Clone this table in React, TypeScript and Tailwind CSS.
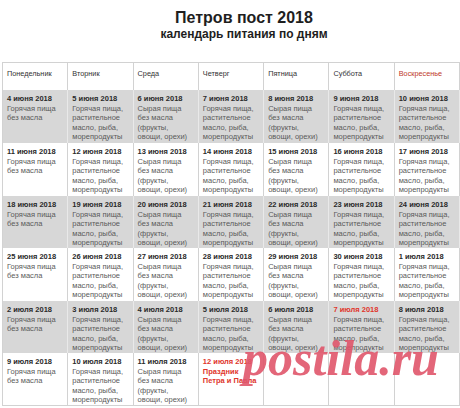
import React from 'react';

type Cell = { date?: string; lines?: string[]; red?: boolean; holiday?: boolean };

const HOT = ['Горячая пища', 'без масла'];
const OIL = ['Горячая пища,', 'растительное', 'масло, рыба,', 'морепродукты'];
const RAW = ['Сырая пища', 'без масла', '(фрукты,', 'овощи, орехи)'];

const days = ['Понедельник', 'Вторник', 'Среда', 'Четверг', 'Пятница', 'Суббота', 'Воскресенье'];
const pattern = [HOT, OIL, RAW, OIL, RAW, OIL, OIL];

const week = (dates: string[]): Cell[] => dates.map((d, i) => ({ date: d, lines: pattern[i] }));

const rows: Cell[][] = [
  week(['4 июня 2018', '5 июня 2018', '6 июня 2018', '7 июня 2018', '8 июня 2018', '9 июня 2018', '10 июня 2018']),
  week(['11 июня 2018', '12 июня 2018', '13 июня 2018', '14 июня 2018', '15 июня 2018', '16 июня 2018', '17 июня 2018']),
  week(['18 июня 2018', '19 июня 2018', '20 июня 2018', '21 июня 2018', '22 июня 2018', '23 июня 2018', '24 июня 2018']),
  week(['25 июня 2018', '26 июня 2018', '27 июня 2018', '28 июня 2018', '29 июня 2018', '30 июня 2018', '1 июля 2018']),
  week(['2 июля 2018', '3 июля 2018', '4 июля 2018', '5 июля 2018', '6 июля 2018', '7 июля 2018', '8 июля 2018']).map((c, i) =>
    i === 5 ? { ...c, red: true } : c,
  ),
  [
    { date: '9 июля 2018', lines: HOT },
    { date: '10 июля 2018', lines: OIL },
    { date: '11 июля 2018', lines: RAW },
    { date: '12 июля 2018', lines: ['Праздник', 'Петра и Павла'], holiday: true },
    {},
    {},
    {},
  ],
];

const rowHeights = ['h-[53px]', 'h-[53px]', 'h-[52px]', 'h-[53px]', 'h-[52px]', 'h-[52px]'];

export default function App() {
  return (
    <div className="relative w-[460px] h-[408px] bg-white overflow-hidden font-['Liberation_Sans',Arial,sans-serif]">
      <div className="pl-[28px] pt-[8px] text-center text-[#1e1e1e]">
        <div className="text-[16px] font-bold leading-[19px]">Петров пост 2018</div>
        <div className="text-[12px] font-bold leading-[14px]">календарь питания по дням</div>
      </div>

      <div className="ml-[2px] mt-[21px] border-t border-l border-b border-[#d2d2d2]">
        <div className="grid grid-cols-7 h-[27px]">
          {days.map((d, i) => (
            <div
              key={d}
              className={`border-r border-[#d2d2d2] px-[4px] pt-[6px] text-[7.3px] leading-[9px] whitespace-nowrap ${
                i === 6 ? 'text-[#c0392b]' : 'text-[#333]'
              }`}
            >
              {d}
            </div>
          ))}
        </div>
        {rows.map((row, r) => (
          <div key={r} className={`grid grid-cols-7 ${rowHeights[r]} ${r % 2 === 0 ? 'bg-[#d7d7d7]' : 'bg-white'}`}>
            {row.map((c, i) => (
              <div
                key={i}
                className={`border-r ${r % 2 === 0 ? 'border-[#e9e9e9]' : 'border-[#d2d2d2]'} px-[4px] pt-[4px] text-[7.5px] leading-[9.6px] whitespace-nowrap`}
              >
                {c.date && (
                  <div className={`font-bold ${c.red || c.holiday ? 'text-[#e0352b]' : 'text-[#2a2a2a]'}`}>{c.date}</div>
                )}
                {c.lines?.map((l) => (
                  <div key={l} className={c.holiday ? 'font-bold text-[#e0352b]' : 'text-[#5a5a5a]'}>
                    {l}
                  </div>
                ))}
              </div>
            ))}
          </div>
        ))}
      </div>

      <div className="absolute left-[243px] top-[328px] text-[50px] leading-[60px] font-bold italic text-[#e0566b] opacity-90 font-['Liberation_Serif',serif]">
        postila.ru
      </div>
    </div>
  );
}
